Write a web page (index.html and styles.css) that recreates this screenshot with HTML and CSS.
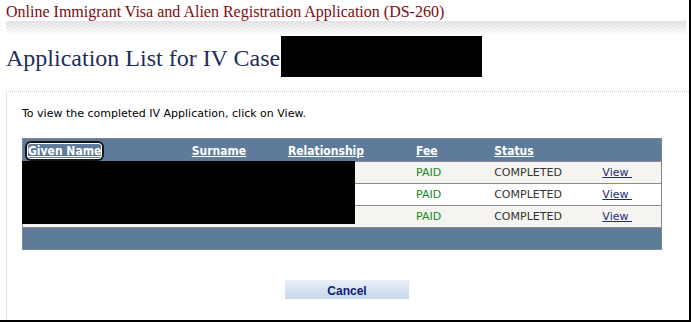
FILE: index.html
```html
<!DOCTYPE html>
<html>
<head>
<meta charset="utf-8">
<title>Application List</title>
<link rel="stylesheet" href="styles.css">
</head>
<body>
<div class="page">
  <div class="app-title">Online Immigrant Visa and Alien Registration Application (DS-260)</div>
  <div class="band"></div>
  <div class="heading">
    <span class="heading-text">Application List for IV Case</span>
    <span class="redact redact-case"></span>
  </div>
  <div class="panel">
    <p class="intro">To view the completed IV Application, click on View.</p>
    <div class="grid-wrap">
      <table class="grid">
        <colgroup>
          <col class="c1"><col class="c2"><col class="c3"><col class="c4"><col class="c5"><col class="c6">
        </colgroup>
        <thead>
          <tr class="head">
            <th><a class="hlink focus" href="#">Given Name</a></th>
            <th><a class="hlink" href="#">Surname</a></th>
            <th><a class="hlink" href="#">Relationship</a></th>
            <th><a class="hlink" href="#">Fee</a></th>
            <th><a class="hlink" href="#">Status</a></th>
            <th></th>
          </tr>
        </thead>
        <tbody>
          <tr class="alt">
            <td></td><td></td><td></td>
            <td class="fee">PAID</td><td class="status">COMPLETED</td><td><a class="view" href="#">View&nbsp;</a></td>
          </tr>
          <tr>
            <td></td><td></td><td></td>
            <td class="fee">PAID</td><td class="status">COMPLETED</td><td><a class="view" href="#">View&nbsp;</a></td>
          </tr>
          <tr class="alt">
            <td></td><td></td><td></td>
            <td class="fee">PAID</td><td class="status">COMPLETED</td><td><a class="view" href="#">View&nbsp;</a></td>
          </tr>
          <tr class="foot"><td colspan="6"></td></tr>
        </tbody>
      </table>
      <div class="redact redact-names"></div>
    </div>
    <div class="actions">
      <button class="btn" type="button">Cancel</button>
    </div>
  </div>
</div>
</body>
</html>
```
FILE: styles.css
```css
html {
  background: #000;
}
body {
  margin: 0;
}
.page {
  width: 683px;
  height: 320px;
  background: #fff;
  overflow: hidden;
  padding: 0 0 0 6px;
}
.app-title {
  font-family: "Liberation Serif", serif;
  font-size: 16px;
  line-height: 18px;
  color: #7b0c0c;
  padding-top: 3px;
}
.band {
  width: 680px;
  height: 13px;
  background:
    repeating-conic-gradient(rgba(0,0,0,0.035) 0 25%, transparent 0 50%) 0 0 / 4px 4px,
    linear-gradient(#e6e6e6, #ffffff);
}
.heading {
  display: flex;
  align-items: flex-start;
  height: 41px;
  margin-top: 2px;
}
.heading-text {
  font-family: "Liberation Serif", serif;
  font-size: 24px;
  line-height: 30px;
  color: #1f2d5c;
  padding-top: 7px;
}
.redact {
  background: #000;
}
.redact-case {
  display: block;
  width: 201px;
  height: 41px;
  margin-left: 1px;
}
.panel {
  margin-top: 14px;
  width: 678px;
  height: 300px;
  border: 1px dotted #d5cdb2;
  border-bottom: none;
  padding-left: 15px;
  box-sizing: content-box;
}
.intro {
  margin: 15px 0 0 0;
  font-family: "DejaVu Sans", sans-serif;
  font-size: 11px;
  line-height: 14px;
  color: #000;
}
.grid-wrap {
  position: relative;
  width: 640px;
  margin-top: 17px;
}
.grid {
  width: 640px;
  border-collapse: collapse;
  table-layout: fixed;
  border: 1px solid #7f8790;
  font-family: "DejaVu Sans", sans-serif;
  font-size: 11px;
}
.c1 { width: 164px; }
.c2 { width: 96px; }
.c3 { width: 128px; }
.c4 { width: 78px; }
.c5 { width: 108px; }
.c6 { width: 64px; }
.grid th, .grid td {
  height: 21px;
  padding: 0 0 0 5px;
  text-align: left;
  vertical-align: middle;
  border-bottom: 1px solid #8a8a8a;
  white-space: nowrap;
}
.grid th {
  padding-top: 1px;
}
.head {
  background: #5e7b9b;
}
.hlink {
  color: #fff;
  font-size: 12px;
  font-weight: bold;
  font-stretch: condensed;
  text-decoration: underline;
}
.focus {
  border-radius: 3px;
  box-shadow: 0 0 0 1px #fff, 0 0 0 3px #161616;
}
.alt {
  background: #f5f4f0;
}
.fee {
  color: #168a1e;
}
.status {
  color: #333;
}
.view {
  color: #1d2a6b;
  text-decoration: underline;
}
.foot {
  background: #5e7b9b;
}
.foot td {
  border-bottom: none;
}
.redact-names {
  position: absolute;
  left: 0;
  top: 23px;
  width: 333px;
  height: 63px;
}
.actions {
  padding: 30px 0 0 263px;
}
.btn {
  width: 124px;
  height: 19px;
  padding: 2px 0 0 0;
  border: none;
  background: linear-gradient(#e9f0f8, #c6d7e8);
  font-family: "Liberation Sans", Arial, sans-serif;
  font-size: 12px;
  font-weight: bold;
  color: #0d1a78;
}
```
